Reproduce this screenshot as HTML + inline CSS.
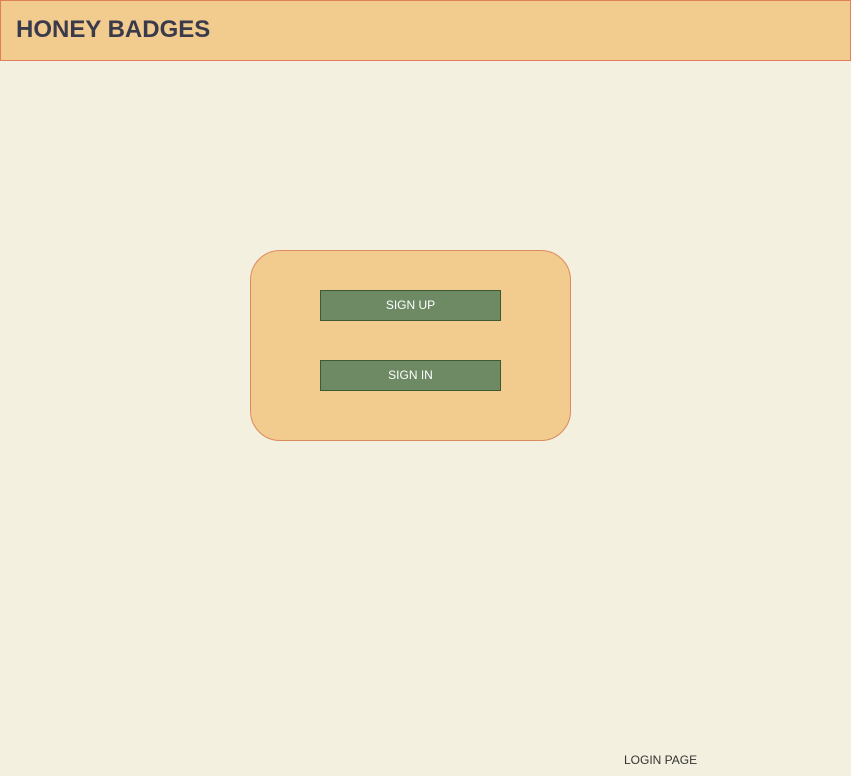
<!DOCTYPE html>
<html><head><style>
body{margin:0;width:851px;height:776px;background:#f4f0df;position:relative;font-family:"Liberation Sans",sans-serif;overflow:hidden}
.hdr{position:absolute;left:0;top:0;width:849px;height:59px;background:#f2cb8f;border:1px solid #e0805a}
.hdr span{position:absolute;left:15px;top:15px;font-size:24px;font-weight:bold;color:#3b3a4a}
.card{position:absolute;left:250px;top:250px;width:319px;height:189px;background:#f2cb8f;border:1px solid #dc8a5e;border-radius:30px}
.btn{position:absolute;left:320px;width:179px;height:29px;background:#6e8a64;border:1px solid #3f5a32;color:#fff;font-size:12px;text-align:center;line-height:29px}
.ft{position:absolute;left:624px;top:753px;font-size:12px;color:#333}
</style></head><body>
<div class="hdr"><span>HONEY BADGES</span></div>
<div class="card"></div>
<div class="btn" style="top:290px">SIGN UP</div>
<div class="btn" style="top:360px">SIGN IN</div>
<div class="ft">LOGIN PAGE</div>
</body></html>
